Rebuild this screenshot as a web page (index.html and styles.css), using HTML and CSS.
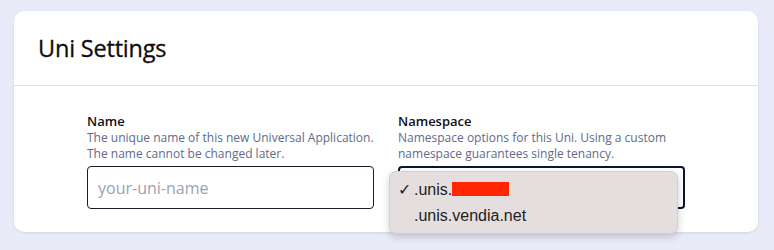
FILE: index.html
```html
<!DOCTYPE html>
<html>
<head>
	<title>Uni Settings</title>
	<link rel="stylesheet" href="styles.css">
</head>
<body>
	<div class="card">
		<div class="card-header">
			<h2>Uni Settings</h2>
		</div>
		<div class="card-body">
			<div class="field">
				<label class="field-label">Name</label>
				<p class="field-help">The unique name of this new Universal Application. The name cannot be changed later.</p>
				<input class="text-input" type="text" placeholder="your-uni-name">
			</div>
			<div class="field">
				<label class="field-label">Namespace</label>
				<p class="field-help">Namespace options for this Uni. Using a custom namespace guarantees single tenancy.</p>
				<div class="select-wrap">
					<div class="select-box"></div>
					<ul class="menu">
						<li class="menu-item checked"><span class="check">&#10003;</span>.unis.<span class="redacted"></span></li>
						<li class="menu-item">.unis.vendia.net</li>
					</ul>
				</div>
			</div>
		</div>
	</div>
</body>
</html>
```

FILE: styles.css
```css
body {
	margin: 0;
	padding: 11px 16px 0 14px;
	background: #e9ecf8;
	font-family: "Open Sans", sans-serif;
	height: 250px;
	box-sizing: border-box;
	overflow: hidden;
}

.card {
	background: #fff;
	border-radius: 10px;
	box-shadow: 0 1px 3px rgba(40, 50, 90, 0.12);
}

.card-header {
	height: 74px;
	border-bottom: 1px solid #e2e2e6;
	display: flex;
	align-items: center;
	padding: 0 24px;
}

h2 {
	margin: 0;
	font-size: 23.5px;
	font-weight: 500;
	color: #0d0d0d;
	letter-spacing: -0.2px;
	-webkit-text-stroke: 0.3px #0d0d0d;
}

.card-body {
	display: grid;
	grid-template-columns: 1fr 1fr;
	gap: 24px;
	padding: 26px 73px 23px 73px;
}

.field-label {
	display: block;
	font-size: 13px;
	font-weight: 600;
	color: #111;
	line-height: 18px;
}

.field-help {
	margin: 0 0 4px;
	font-size: 12px;
	line-height: 16px;
	color: #5e6b8b;
}

.text-input {
	display: block;
	width: 100%;
	box-sizing: border-box;
	height: 43px;
	border: 1px solid #1a1d29;
	border-radius: 4px;
	padding: 0 10px;
	font-family: "Open Sans", sans-serif;
	font-size: 16px;
	outline: none;
}

.text-input::placeholder {
	color: #9aa2b4;
}

.select-wrap {
	position: relative;
}

.select-box {
	height: 43px;
	box-sizing: border-box;
	border: 2px solid #0b1433;
	border-radius: 4px;
}

.menu {
	position: absolute;
	left: -9px;
	top: 5px;
	width: 289px;
	height: 63px;
	box-sizing: border-box;
	margin: 0;
	padding: 5px 0;
	list-style: none;
	background: #e4dfde;
	border: 1px solid #d3cfcf;
	border-radius: 7px;
	box-shadow: 0 3px 8px rgba(0, 0, 0, 0.18);
	font-family: "Liberation Sans", sans-serif;
	font-size: 16px;
	color: #222;
}

.menu-item {
	height: 26px;
	line-height: 26px;
	padding-left: 24px;
	position: relative;
}

.check {
	position: absolute;
	left: 8px;
	font-size: 16px;
}

.redacted {
	display: inline-block;
	width: 57px;
	height: 14px;
	background: #ff2600;
	vertical-align: -1px;
}
```
